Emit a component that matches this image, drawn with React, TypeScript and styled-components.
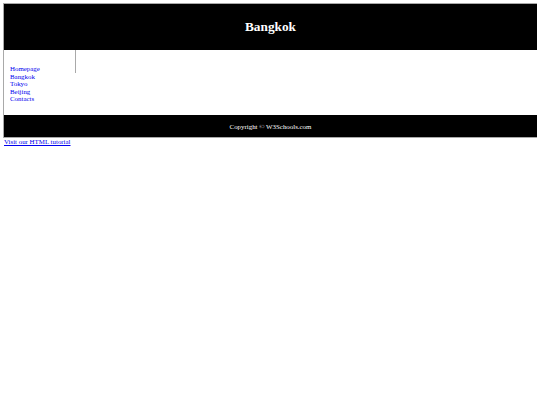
import styled, { createGlobalStyle } from "styled-components";

const GlobalStyle = createGlobalStyle`
  body {
    margin: 3px;
    font-family: "Liberation Serif", "Times New Roman", serif;
    background: #fff;
  }
`;

const Container = styled.div`
  border: 1px solid #a9a9a9;
  width: 533px;
`;

const Header = styled.header`
  background: #000;
  height: 46px;
  display: flex;
  align-items: center;
  justify-content: center;
`;

const Title = styled.h2`
  margin: 0;
  color: #fff;
  font-size: 13.3px;
  font-weight: bold;
`;

const Section = styled.section`
  display: flex;
  height: 65px;
`;

const Nav = styled.nav`
  box-sizing: border-box;
  width: 72px;
  height: 23px;
  border-right: 1px solid #a9a9a9;
  padding-top: 15px;
`;

const NavList = styled.ul`
  list-style: none;
  margin: 0;
  padding: 0 0 0 6px;
  font-size: 6.9px;
  line-height: 7.5px;
`;

const NavLink = styled.a`
  color: #0000ee;
  text-decoration: none;
`;

const Footer = styled.footer`
  background: #000;
  color: #fff;
  height: 22px;
  display: flex;
  align-items: center;
  justify-content: center;
  font-size: 6.9px;
  font-variant-emoji: text;
`;

const TutorialLink = styled.a`
  display: block;
  width: fit-content;
  margin-left: 1px;
  color: #0000ee;
  font-size: 6.9px;
  line-height: 8px;
`;

const links = ["Homepage", "Bangkok", "Tokyo", "Beijing", "Contacts"];

export default function App() {
  return (
    <>
      <GlobalStyle />
      <Container>
        <Header>
          <Title>Bangkok</Title>
        </Header>
        <Section>
          <Nav>
            <NavList>
              {links.map((l) => (
                <li key={l}>
                  <NavLink href="#">{l}</NavLink>
                </li>
              ))}
            </NavList>
          </Nav>
        </Section>
        <Footer>Copyright {"\u00A9\uFE0E"} W3Schools.com</Footer>
      </Container>
      <TutorialLink href="#">Visit our HTML tutorial</TutorialLink>
    </>
  );
}
